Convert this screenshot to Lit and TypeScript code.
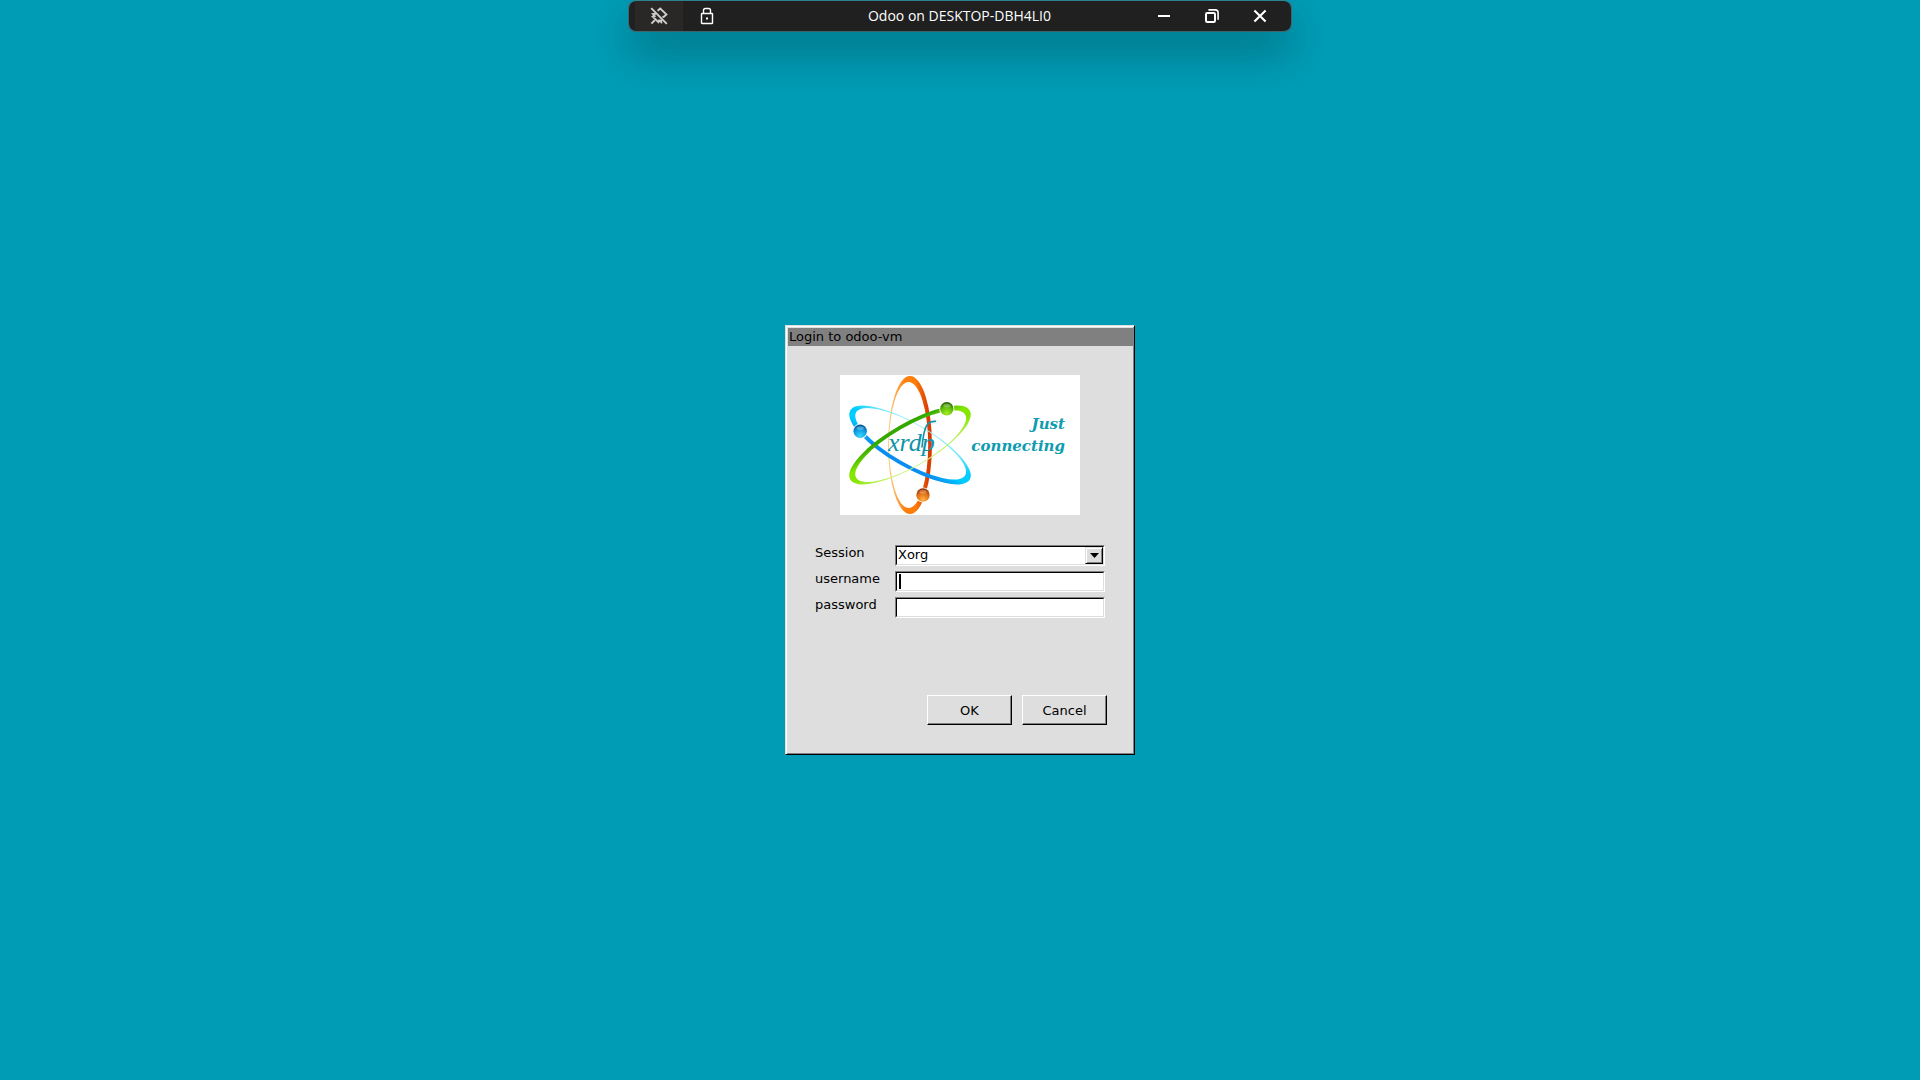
import { LitElement, html, svg, css } from "lit";
import { customElement, property } from "lit/decorators.js";

/** Floating bar of the remote session: pin, lock, title and window controls. */
@customElement("connection-bar")
class ConnectionBar extends LitElement {
  @property() title = "";

  static styles = css`
    :host {
      display: grid;
      grid-template-columns: 1fr auto 1fr;
      align-items: stretch;
      box-sizing: border-box;
      height: 32px;
      padding: 0 7px 0 6px;
      border: 1px solid rgba(90, 85, 85, 0.7);
      border-top-color: rgba(90, 110, 115, 0.5);
      border-radius: 8px;
      background: #202020;
      background-clip: padding-box;
      box-shadow: 0 20px 44px rgba(0, 0, 0, 0.28);
      color: #fff;
      font-family: "Open Sans", "Noto Sans", sans-serif;
    }
    .group {
      display: flex;
    }
    .end {
      justify-content: flex-end;
    }
    button {
      display: grid;
      place-items: center;
      width: 48px;
      padding: 0;
      border: 0;
      background: transparent;
      color: inherit;
    }
    .active {
      background: #292827;
      color: #d0cecc;
    }
    svg {
      display: block;
      fill: none;
      stroke: currentColor;
    }
    .title {
      margin: 0;
      font-size: 14px;
      font-weight: 400;
      line-height: 30px;
      white-space: nowrap;
    }
  `;

  render() {
    return html`
      <div class="group">
        <button class="active" aria-label="Pin the bar">
          <svg width="18" height="18" viewBox="0 0 18 18" stroke-width="1.9">
            <path d="M1.2 1.2 16.8 16.8" />
            <path d="M7.6 3.8 10.2 1.6 16.4 7.4 13.8 9.8 12.4 10" />
            <path d="M6 6.8 3 7 4.6 9 2.8 9.6 8.4 15.2 9.2 13.4 11.2 15 11.2 12.4" />
            <path d="M5 13 1.4 16.6" />
          </svg>
        </button>
        <button aria-label="Connection security">
          <svg width="14" height="18" viewBox="0 0 14 18" stroke-width="1.4">
            <rect x="1.5" y="6.5" width="11" height="10" rx="0.6" />
            <path d="M3.5 6.5V3.4Q3.5 1.5 5.4 1.5H8.6Q10.5 1.5 10.5 3.4V6.5" />
            <rect x="6" y="10.5" width="2" height="2" fill="currentColor" stroke="none" />
          </svg>
        </button>
      </div>
      <h1 class="title">${this.title}</h1>
      <div class="group end">
        <button aria-label="Minimize">
          <svg width="14" height="14" viewBox="0 0 14 14" stroke-width="2"><path d="M1 7H13" /></svg>
        </button>
        <button aria-label="Restore">
          <svg width="14" height="14" viewBox="0 0 14 14" stroke-width="2">
            <rect x="1" y="4" width="9" height="9" rx="1.2" />
            <path stroke-width="1.6" d="M3.4 0.9H10.2Q13.1 0.9 13.1 3.8V10.8" />
          </svg>
        </button>
        <button aria-label="Close">
          <svg width="14" height="14" viewBox="0 0 14 14" stroke-width="2.1">
            <path d="M1.4 1.4 12.6 12.6M12.6 1.4 1.4 12.6" />
          </svg>
        </button>
      </div>
    `;
  }
}

/** Atom logo: one orbit shape turned in steps of 120 degrees. */
@customElement("xrdp-logo")
class XrdpLogo extends LitElement {
  static styles = css`
    :host {
      display: block;
    }
    svg {
      display: block;
      width: 100%;
      background: #fff;
    }
    .script {
      fill: #0f93a9;
      font: italic 26px "Liberation Serif", serif;
    }
    .swash {
      fill: none;
      stroke: #0f93a9;
      stroke-linecap: round;
    }
    .slogan {
      fill: #0f9bb0;
      font: italic bold 15px "DejaVu Serif", serif;
      text-anchor: end;
    }
  `;

  private orbits = [
    { id: "orange", turn: 0, pale: "#fbd08a", tip: "#ff7d0a", deep: "#d83c00", ball: ["#ffb347", "#e06a10", "#8a2c00"] },
    { id: "blue", turn: 120, pale: "#a4f2fa", tip: "#00ccff", deep: "#0a8cf0", ball: ["#35d6ff", "#0a9ae0", "#004a8c"] },
    { id: "green", turn: -120, pale: "#d4f58c", tip: "#86e600", deep: "#35a800", ball: ["#a6ee20", "#5cb808", "#1f5c00"] },
  ];

  render() {
    return html`
      <svg viewBox="0 0 240 140" role="img" aria-label="xrdp">
        <defs>
          ${this.orbits.map(
            (o) => svg`
              <linearGradient id=${o.id} gradientUnits="userSpaceOnUse" x1="-22" y1="0" x2="22" y2="0">
                <stop offset="0" stop-color=${o.pale} />
                <stop offset="0.4" stop-color=${o.tip} />
                <stop offset="0.62" stop-color=${o.tip} />
                <stop offset="0.92" stop-color=${o.deep} />
              </linearGradient>
              <radialGradient id=${o.id + "-ball"} cx="0.5" cy="0.85" r="0.85">
                <stop offset="0" stop-color=${o.ball[0]} />
                <stop offset="0.6" stop-color=${o.ball[1]} />
                <stop offset="1" stop-color=${o.ball[2]} />
              </radialGradient>`
          )}
        </defs>
        ${this.orbits.map(
          (o) => svg`
            <path transform="translate(70 70) rotate(${o.turn})" fill="url(#${o.id})" fill-rule="evenodd"
              d="M-22 0A22 69 0 0 1 22 0A22 69 0 0 1 -22 0ZM-21 0A19.6 63 0 0 0 18.2 0A19.6 63 0 0 0 -21 0Z" />`
        )}
        ${this.orbits.map(
          (o) => svg`
            <g transform="translate(70 70) rotate(${o.turn}) translate(13 50) rotate(${-o.turn})">
              <circle r="7.6" fill="#fff" />
              <circle r="6.7" fill="url(#${o.id}-ball)" />
              <ellipse cy="-3.2" rx="3.6" ry="1.9" fill="#fff" opacity="0.28" />
            </g>`
        )}
        <text class="script" x="48" y="76">xrdp</text>
        <path class="swash" stroke-width="1.6" d="M82 72C83 62 84 54 87 50Q90 46 95.5 46.4" />
        <text class="slogan" x="225" y="54">Just</text>
        <text class="slogan" x="225" y="76">connecting</text>
      </svg>
    `;
  }
}

/** Login window with session choice and credentials. */
@customElement("login-dialog")
class LoginDialog extends LitElement {
  static styles = css`
    :host {
      display: block;
      box-sizing: border-box;
      width: 350px;
      padding: 2px 1px 1px 2px;
      border: 1px solid #dedede;
      border-right-color: #000;
      border-bottom-color: #000;
      background: #dedede;
      box-shadow: inset 1px 1px #fff, inset -1px -1px #808080;
      color: #000;
      font: 13px/15px "DejaVu Sans", Verdana, sans-serif;
    }
    .caption {
      margin: 0;
      padding: 1px 1px 2px;
      background: #808080;
      font: inherit;
    }
    form {
      display: flex;
      flex-direction: column;
      padding: 29px 26px 28px 27px;
    }
    .logo {
      width: 240px;
      margin-left: 25px;
    }
    .fields {
      display: grid;
      grid-template-columns: 80px 210px;
      row-gap: 5px;
      margin-top: 30px;
    }
    .field {
      position: relative;
      box-sizing: border-box;
      height: 21px;
      border: 1px solid #808080;
      border-right-color: #fff;
      border-bottom-color: #fff;
      background: #fff;
    }
    input,
    select {
      display: block;
      appearance: none;
      box-sizing: border-box;
      width: 100%;
      height: 100%;
      margin: 0;
      padding: 0 1px 2px;
      border: 1px solid #000;
      border-right-color: #dedede;
      border-bottom-color: #dedede;
      border-radius: 0;
      outline: 0;
      background: #fff;
      color: inherit;
      font: inherit;
    }
    .caret {
      position: absolute;
      top: 2px;
      left: 3px;
      width: 2px;
      height: 15px;
      background: #000;
    }
    .drop {
      position: absolute;
      top: 1px;
      right: 1px;
      display: grid;
      place-items: center;
      box-sizing: border-box;
      width: 18px;
      height: 17px;
      border: 1px solid #dedede;
      border-right-color: #000;
      border-bottom-color: #000;
      background: #dedede;
      box-shadow: inset 1px 1px #fff, inset -1px -1px #808080;
      pointer-events: none;
    }
    .actions {
      display: flex;
      justify-content: flex-end;
      gap: 10px;
      margin-top: 77px;
    }
    .actions button {
      width: 85px;
      height: 30px;
      padding: 1px 0 0;
      border: 1px solid #fff;
      border-right-color: #000;
      border-bottom-color: #000;
      background: #dedede;
      box-shadow: inset -1px -1px #808080;
      color: inherit;
      font: inherit;
    }
  `;

  render() {
    return html`
      <h2 class="caption">Login to odoo-vm</h2>
      <form @submit=${(e: Event) => e.preventDefault()}>
        <xrdp-logo class="logo"></xrdp-logo>
        <div class="fields">
          <label for="session">Session</label>
          <div class="field">
            <select id="session">
              <option>Xorg</option>
            </select>
            <span class="drop">
              <svg width="9" height="5" viewBox="0 0 9 5"><path d="M0 0H9L4.5 5Z" /></svg>
            </span>
          </div>
          <label for="username">username</label>
          <div class="field">
            <input id="username" type="text" />
            <span class="caret"></span>
          </div>
          <label for="password">password</label>
          <div class="field">
            <input id="password" type="password" />
          </div>
        </div>
        <div class="actions">
          <button type="submit">OK</button>
          <button type="button">Cancel</button>
        </div>
      </form>
    `;
  }
}

@customElement("app-root")
class AppRoot extends LitElement {
  static styles = css`
    :host {
      position: relative;
      display: grid;
      place-items: center;
      min-height: 100vh;
      overflow: hidden;
      background: #009cb5;
    }
    .bar {
      position: absolute;
      top: 0;
      left: 50%;
      width: 664px;
      transform: translateX(-50%);
    }
  `;

  render() {
    return html`
      <connection-bar class="bar" title="Odoo on DESKTOP-DBH4LI0"></connection-bar>
      <login-dialog></login-dialog>
    `;
  }
}
